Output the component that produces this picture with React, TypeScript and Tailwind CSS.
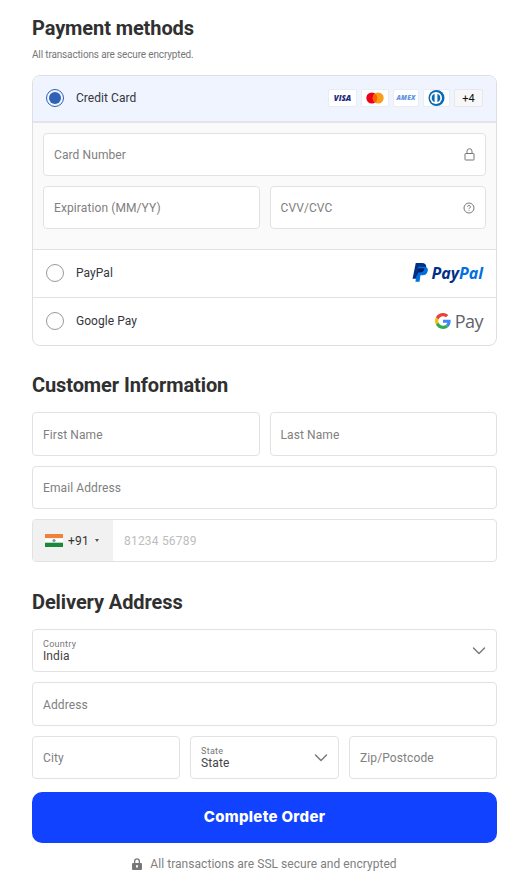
import React from 'react';

const fieldBox = 'h-[43px] border border-[#e2e2e2] rounded-[4px] bg-white flex items-center';

function Field({ label, className = '', icon }: { label: string; className?: string; icon?: React.ReactNode }) {
  return (
    <div className={`${fieldBox} px-[10px] justify-between ${className}`}>
      <span className="text-[12px] leading-none tracking-[0.1px] text-[#808080]">{label}</span>
      {icon}
    </div>
  );
}

function Chevron() {
  return (
    <svg width="14" height="14" viewBox="0 0 14 14" fill="none" stroke="#7a7a7a" strokeWidth="1.5" strokeLinecap="round" strokeLinejoin="round">
      <path d="M1.5 4 7 9.5 12.5 4" />
    </svg>
  );
}

function SelectField({ label, value, className = '' }: { label: string; value: string; className?: string }) {
  return (
    <div className={`${fieldBox} pl-[10px] pr-[10px] justify-between ${className}`}>
      <div className="flex flex-col pt-[1px]">
        <span className="text-[9px] leading-[11px] tracking-[0.3px] text-[#777]">{label}</span>
        <span className="text-[12px] leading-[13px] tracking-[0.1px] text-[#444]">{value}</span>
      </div>
      <Chevron />
    </div>
  );
}

function Radio({ checked }: { checked?: boolean }) {
  if (checked) {
    return (
      <div className="w-[18px] h-[18px] rounded-full border border-[#2f62b5] flex items-center justify-center shrink-0">
        <div className="w-[12px] h-[12px] rounded-full bg-[#2f62b5]" />
      </div>
    );
  }
  return <div className="w-[18px] h-[18px] rounded-full border border-[#9a9a9a] bg-white shrink-0" />;
}

function CardChip({ children, className = '' }: { children: React.ReactNode; className?: string }) {
  return (
    <div className={`h-[18px] rounded-[2px] border border-[#e8ecf4] bg-white flex items-center justify-center overflow-hidden ${className}`}>
      {children}
    </div>
  );
}

function PayPalMark() {
  return (
    <div className="flex items-center gap-[3px]">
      <svg width="16" height="19" viewBox="0 0 17 20">
        <path fill="#003087" d="M4 0h6.5c3.4 0 5 1.9 4.5 4.7-.6 3.4-2.9 5.3-6.2 5.3H6.3L5.2 16.6H.6L4 0z" />
        <path fill="#0070e0" d="M6.6 4h6.2c2.9 0 4.4 1.6 4 4.1-.6 3.1-2.7 4.9-5.7 4.9H9l-1 6.9H3.6L6.6 4z" />
        <path fill="#001c64" d="M6.4 5.6h5.4c.6 0 1 .1 1.4.2-.3 2.8-2.3 4.2-5 4.2H6.3l-.7 3-1 .1L6.4 5.6z" />
      </svg>
      <span className="text-[16px] leading-none font-bold italic tracking-[0px] text-[#003087] font-['Open_Sans',sans-serif]">
        Pay<span className="text-[#0070e0]">Pal</span>
      </span>
    </div>
  );
}

function GooglePayMark() {
  return (
    <div className="flex items-center gap-[4px]">
      <svg width="16" height="16" viewBox="0 0 48 48">
        <path fill="#EA4335" d="M24 9.5c3.5 0 6.6 1.2 9.1 3.6l6.8-6.8C35.8 2.5 30.4 0 24 0 14.6 0 6.5 5.4 2.6 13.2l7.9 6.2C12.4 13.7 17.7 9.5 24 9.5z" />
        <path fill="#4285F4" d="M46.9 24.5c0-1.6-.1-3.1-.4-4.5H24v9h12.9c-.6 3-2.2 5.5-4.7 7.2l7.6 5.9c4.4-4.1 7.1-10.2 7.1-17.6z" />
        <path fill="#FBBC05" d="M10.5 28.6c-.5-1.4-.8-3-.8-4.6s.3-3.2.8-4.6l-7.9-6.2C.9 16.5 0 20.1 0 24s.9 7.5 2.6 10.8l7.9-6.2z" />
        <path fill="#34A853" d="M24 48c6.5 0 11.9-2.1 15.9-5.9l-7.6-5.9c-2.1 1.4-4.9 2.3-8.3 2.3-6.3 0-11.6-4.2-13.5-9.9l-7.9 6.2C6.5 42.6 14.6 48 24 48z" />
      </svg>
      <span className="text-[18px] leading-none tracking-[-0.5px] text-[#5f6368] font-['Open_Sans',sans-serif]">Pay</span>
    </div>
  );
}

export default function App() {
  return (
    <div className="w-[527px] h-[882px] overflow-hidden bg-white pl-[32px] pr-[30px] pt-[16px] font-['Roboto',sans-serif]">
      <h2 className="text-[20px] leading-[24px] font-bold tracking-[-0.1px] text-[#303030]">Payment methods</h2>
      <p className="mt-[9px] text-[10px] leading-[12px] tracking-[-0.15px] text-[#777]">All transactions are secure encrypted.</p>

      {/* Payment box */}
      <div className="mt-[14px] border border-[#dfdfdf] rounded-[8px] overflow-hidden">
        <div className="h-[47px] bg-[#eff4fe] border-b-2 border-[#e2e4e9] flex items-center px-[13px] pb-[1px]">
          <Radio checked />
          <span className="ml-[12px] text-[12px] tracking-[0.05px] text-[#33363d]">Credit Card</span>
          <div className="ml-auto flex items-center gap-[4px]">
            <CardChip className="w-[29px]">
              <span className="text-[8px] leading-none font-black italic text-[#1c2b7f] font-['Open_Sans',sans-serif]">VISA</span>
            </CardChip>
            <CardChip className="w-[28px]">
              <svg width="18" height="12" viewBox="0 0 18 12">
                <circle cx="5.8" cy="6" r="5.5" fill="#eb001b" />
                <circle cx="12.2" cy="6" r="5.5" fill="#f79e1b" />
                <path d="M9 1.5a5.5 5.5 0 0 1 0 9 5.5 5.5 0 0 1 0-9z" fill="#ff5f00" />
              </svg>
            </CardChip>
            <CardChip className="w-[26px]">
              <span className="text-[6.5px] leading-none font-black italic text-[#5f93e0] tracking-[0.2px] font-['Open_Sans',sans-serif]">AMEX</span>
            </CardChip>
            <CardChip className="w-[27px]">
              <svg width="19" height="16" viewBox="0 0 19 16">
                <circle cx="9.5" cy="8" r="8" fill="#0a6ab4" />
                <circle cx="9" cy="8" r="6" fill="#fff" />
                <path d="M7.6 3.8v8.4a4.5 4.5 0 0 1 0-8.4zM10.4 3.8a4.5 4.5 0 0 1 0 8.4z" fill="#0a6ab4" />
              </svg>
            </CardChip>
            <div className="w-[29px] h-[18px] rounded-[2px] border border-[#e6e8ee] bg-[#f7f7f8] flex items-center justify-center text-[11px] leading-none text-[#111]">+4</div>
          </div>
        </div>

        <div className="bg-[#fafafa] pt-[10px] px-[10px] pb-[20px] flex flex-col gap-[10px] border-b border-[#e2e2e2]">
          <Field
            label="Card Number"
            icon={
              <svg width="11" height="13" viewBox="0 0 11 13" fill="none" stroke="#777" strokeWidth="1">
                <rect x="1" y="5.5" width="9" height="6.5" rx="0.5" />
                <path d="M3 5.5V3.2a2.5 2.5 0 0 1 5 0v2.3" />
              </svg>
            }
          />
          <div className="flex gap-[10px]">
            <Field label="Expiration (MM/YY)" className="flex-1" />
            <Field
              label="CVV/CVC"
              className="flex-1"
              icon={
                <svg width="12" height="12" viewBox="0 0 12 12" fill="none" stroke="#777" strokeWidth="1">
                  <circle cx="6" cy="6" r="5" />
                  <path d="M4.6 4.8a1.4 1.4 0 1 1 2.1 1.2c-.5.3-.7.5-.7 1.1" />
                  <path d="M6 8.2v.8" />
                </svg>
              }
            />
          </div>
        </div>

        <div className="h-[48px] flex items-center px-[13px] pb-[2px] border-b border-[#e2e2e2]">
          <Radio />
          <span className="ml-[12px] text-[12px] tracking-[0.05px] text-[#33363d]">PayPal</span>
          <div className="ml-auto"><PayPalMark /></div>
        </div>
        <div className="h-[47px] flex items-center px-[13px] pb-[1px]">
          <Radio />
          <span className="ml-[12px] text-[12px] tracking-[0.05px] text-[#33363d]">Google Pay</span>
          <div className="ml-auto"><GooglePayMark /></div>
        </div>
      </div>

      {/* Customer */}
      <h2 className="mt-[27px] text-[20px] leading-[24px] font-bold tracking-[-0.1px] text-[#303030]">Customer Information</h2>
      <div className="mt-[15px] flex flex-col gap-[10px]">
        <div className="flex gap-[10px]">
          <Field label="First Name" className="flex-1 !h-[44px] pt-[2px]" />
          <Field label="Last Name" className="flex-1 !h-[44px] pt-[2px]" />
        </div>
        <Field label="Email Address" />
        <div className={fieldBox + ' overflow-hidden'}>
          <div className="w-[80px] h-full bg-[#f1f1f1] flex items-center pl-[12px]">
            <svg width="18" height="13" viewBox="0 0 18 13">
              <rect width="18" height="4.3" fill="#f0813a" />
              <rect y="4.3" width="18" height="4.4" fill="#fff" />
              <rect y="8.7" width="18" height="4.3" fill="#1a8a3a" />
              <circle cx="9" cy="6.5" r="1.6" fill="#8a8fb0" />
            </svg>
            <span className="ml-[5px] text-[12px] tracking-[0.2px] text-[#333]">+91</span>
            <span className="ml-[6px] w-0 h-0 border-x-[2.5px] border-x-transparent border-t-[3px] border-t-[#555]" />
          </div>
          <span className="ml-[11px] text-[12px] tracking-[0.2px] text-[#bdbdbd]">81234 56789</span>
        </div>
      </div>

      {/* Delivery */}
      <h2 className="mt-[28px] text-[20px] leading-[24px] font-bold tracking-[-0.1px] text-[#303030]">Delivery Address</h2>
      <div className="mt-[15px] flex flex-col gap-[10px]">
        <SelectField label="Country" value="India" />
        <Field label="Address" className="!h-[44px] pt-[2px]" />
        <div className="flex gap-[10px]">
          <Field label="City" className="w-[148px]" />
          <SelectField label="State" value="State" className="w-[149px]" />
          <Field label="Zip/Postcode" className="flex-1" />
        </div>
      </div>

      <button className="mt-[13px] w-full h-[51px] rounded-[10px] bg-[#1142ff] text-white text-[15px] font-extrabold tracking-[0.3px] font-['Inter',sans-serif]">
        Complete Order
      </button>

      <div className="mt-[14px] flex items-center justify-center gap-[8px] text-[12px] leading-[14px] tracking-[0.05px] text-[#808080]">
        <svg width="10" height="12" viewBox="0 0 10 12">
          <path fill="#777" fillRule="evenodd" d="M2 5V3.2a3 3 0 0 1 6 0V5h1a1 1 0 0 1 1 1v5a1 1 0 0 1-1 1H1a1 1 0 0 1-1-1V6a1 1 0 0 1 1-1h1zm1.3 0h3.4V3.2a1.7 1.7 0 0 0-3.4 0V5zM5 7a1 1 0 0 0-.5 1.9V10h1V8.9A1 1 0 0 0 5 7z" />
        </svg>
        <span>All transactions are SSL secure and encrypted</span>
      </div>
    </div>
  );
}
